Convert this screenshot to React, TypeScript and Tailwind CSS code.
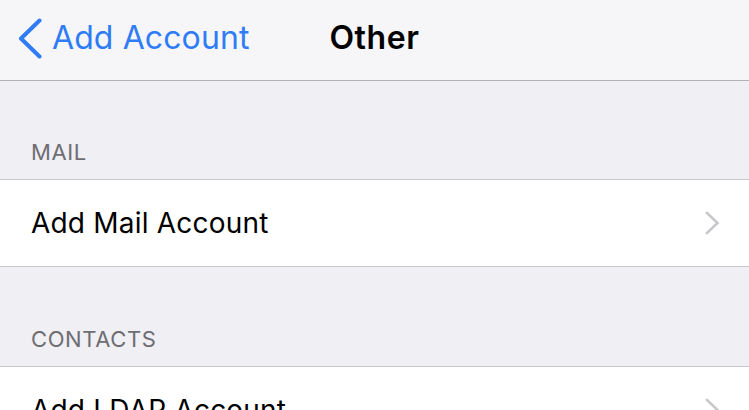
import React from 'react';

const Chevron = ({ className }: { className?: string }) => (
  <svg viewBox="0 0 15 24" className={className} fill="none">
    <path d="M2 2l10.5 10L2 22" stroke="currentColor" strokeWidth="2.6" strokeLinecap="square" />
  </svg>
);

const Row = ({ label }: { label: string }) => (
  <div className="flex h-[86px] items-center justify-between bg-white pl-[31px] pr-[29px]">
    <span className="text-[28px] tracking-[0.2px] text-black">{label}</span>
    <Chevron className="h-[24px] w-[15px] text-[#c7c7cc]" />
  </div>
);

const SectionHeader = ({ title, h }: { title: string; h: string }) => (
  <div className={`flex items-end bg-[#efeff4] px-[31px] pb-[16px] ${h}`}>
    <span className="text-[22px] leading-none tracking-[0.6px] text-[#6d6d72]">{title}</span>
  </div>
);

export default function App() {
  return (
    <div className="h-[410px] w-[749px] overflow-hidden bg-[#efeff4] font-['Inter',sans-serif]">
      {/* Nav bar */}
      <div className="grid h-[81px] grid-cols-[1fr_auto_1fr] items-center border-b border-[#b2b2b2] bg-[#f6f6f8] pb-[4px]">
        <div className="flex items-center pl-[18px] text-[#2f7cf6]">
          <svg viewBox="0 0 24 41" className="h-[41px] w-[24px]" fill="none">
            <path d="M21.5 2.5L3 20.5l18.5 18" stroke="currentColor" strokeWidth="4" strokeLinecap="round" strokeLinejoin="round" />
          </svg>
          <span className="ml-[10px] text-[32px] tracking-[0.1px]">Add Account</span>
        </div>
        <span className="text-[32px] font-semibold tracking-[0.6px] text-black">Other</span>
        <div />
      </div>

      <SectionHeader title="MAIL" h="h-[98px]" />
      <div className="border-y border-[#c8c7cc]">
        <Row label="Add Mail Account" />
      </div>

      <SectionHeader title="CONTACTS" h="h-[99px]" />
      <div className="border-t border-[#c8c7cc]">
        <Row label="Add LDAP Account" />
      </div>
    </div>
  );
}
